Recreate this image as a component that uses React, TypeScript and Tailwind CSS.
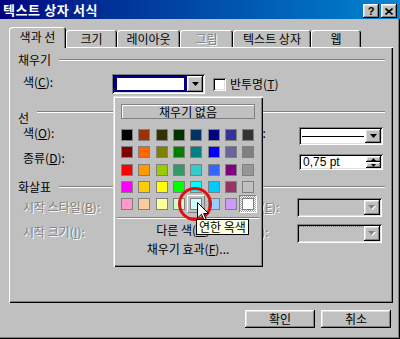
import React from 'react';

const raised =
  'bg-[#c0c0c0] shadow-[inset_-1px_-1px_#000000,inset_1px_1px_#ffffff,inset_-2px_-2px_#808080,inset_2px_2px_#dfdfdf]';
const sunken =
  'shadow-[inset_1px_1px_#808080,inset_-1px_-1px_#ffffff,inset_2px_2px_#000000,inset_-2px_-2px_#dfdfdf]';
const disabledText = 'text-[#808080] [text-shadow:1px_1px_0_#ffffff]';

const swatches = [
  ['#000000', '#993300', '#333300', '#003300', '#003366', '#000080', '#333399', '#333333'],
  ['#800000', '#ff6600', '#808000', '#008000', '#008080', '#0000ff', '#666699', '#808080'],
  ['#ff0000', '#ff9900', '#99cc00', '#339966', '#33cccc', '#3366ff', '#800080', '#969696'],
  ['#ff00ff', '#ffcc00', '#ffff00', '#00ff00', '#00ffff', '#00ccff', '#993366', '#c0c0c0'],
  ['#ff99cc', '#ffcc99', '#ffff99', '#ccffcc', '#ccffff', '#99ccff', '#cc99ff', '#ffffff'],
];

function DownArrow({ disabled }: { disabled?: boolean }) {
  if (disabled) {
    return (
      <svg width="8" height="5" viewBox="0 0 8 5">
        <path d="M1 1h7L4.5 5z" fill="#ffffff" />
        <path d="M0 0h7L3.5 4z" fill="#808080" />
      </svg>
    );
  }
  return (
    <svg width="7" height="4" viewBox="0 0 7 4">
      <path d="M0 0h7L3.5 4z" fill="#000000" />
    </svg>
  );
}

function DropButton({ disabled }: { disabled?: boolean }) {
  return (
    <div className={`flex h-full w-[16px] items-center justify-center ${raised}`}>
      <DownArrow disabled={disabled} />
    </div>
  );
}

function GroupHeader({ label, className = '' }: { label: string; className?: string }) {
  return (
    <div className={`flex pl-[9px] pr-[8px] ${className}`}>
      <span>{label}</span>
      <div className="ml-[8px] h-[2px] flex-1 border-t border-t-[#808080] border-b border-b-white" />
    </div>
  );
}

function Tab({ label, w, active, disabled }: { label: string; w: number; active?: boolean; disabled?: boolean }) {
  const size = active ? 'h-[21px] -mb-[1px] relative z-10' : 'h-[17px]';
  return (
    <div
      className={`flex items-center justify-center rounded-t-[3px] bg-[#c0c0c0] shadow-[inset_1px_1px_#ffffff,inset_-1px_0_#000000,inset_-2px_0_#808080] ${size} ${
        disabled ? disabledText : ''
      }`}
      style={{ width: w }}
    >
      <span className={active ? 'pb-[2px]' : ''}>{label}</span>
    </div>
  );
}

function ColorPopup() {
  return (
    <div className="absolute left-[113px] top-[96px] z-20 flex h-[171px] w-[150px] flex-col bg-[#c0c0c0] px-[8px] pt-[8px] shadow-[inset_1px_1px_#dfdfdf,inset_2px_2px_#ffffff,inset_-1px_-1px_#000000,inset_-2px_-2px_#808080]">
      <div className="flex h-[15px] items-center justify-center border border-[#808080] shadow-[inset_1px_1px_#ffffff]">
        채우기 없음
      </div>
      <div className="mt-[10px] grid grid-cols-[repeat(8,12px)] gap-x-[5.33px] gap-y-[5.25px]">
        {swatches.flat().map((c, i) => (
          <div key={i} className="relative h-[12px] w-[12px]">
            {i === 36 && (
              <div className="absolute -inset-[3px] border border-t-white border-l-white border-r-[#808080] border-b-[#808080]" />
            )}
            {i === 39 && (
              <div className="absolute -inset-[3px] border border-t-[#808080] border-l-[#808080] border-r-white border-b-white bg-[image:repeating-conic-gradient(#ffffff_0%_25%,#a0a0a0_0%_50%)] bg-[length:2px_2px]" />
            )}
            <div className="relative h-full w-full border border-[#808080]" style={{ backgroundColor: c }} />
          </div>
        ))}
      </div>
      <div className="-mx-[4px] mt-[7px] h-[2px] border-t border-t-[#808080] border-b border-b-white" />
      <div className="mt-[1px] flex h-[19px] items-center justify-center">
        다른 색(<u>M</u>)...
      </div>
      <div className="flex h-[19px] items-center justify-center">
        채우기 효과(<u>F</u>)...
      </div>
    </div>
  );
}

export default function App() {
  return (
    <div className="relative h-[339px] w-[400px] overflow-hidden bg-[#c0c0c0] font-['Noto_Sans_CJK_KR','Noto_Sans',sans-serif] text-[12px] leading-[12px] text-black shadow-[inset_-1px_-1px_#000000,inset_-2px_-2px_#808080]">
      {/* title bar */}
      <div className="flex h-[19px] items-center bg-linear-to-r from-[#000080] to-[#1084d0] pl-[3px] pr-[3px]">
        <span className="text-[13px] font-bold leading-[13px] tracking-[0.6px] text-white">텍스트 상자 서식</span>
        <div className="ml-auto mt-[3px] flex gap-[2px]">
          <div className={`flex h-[14px] w-[16px] items-center justify-center ${raised}`}>
            <span className="font-['Liberation_Sans',sans-serif] text-[11px] font-bold leading-[11px]">?</span>
          </div>
          <div className={`flex h-[14px] w-[16px] items-center justify-center ${raised}`}>
            <svg width="8" height="7" viewBox="0 0 8 7">
              <path d="M0.5 0.5L7.5 6.5M7.5 0.5L0.5 6.5" stroke="#000000" strokeWidth="1.6" />
            </svg>
          </div>
        </div>
      </div>

      {/* tabs */}
      <div className="mt-[8px] flex h-[20px] items-end pl-[9px]">
        <Tab label="색과 선" w={57} active />
        <Tab label="크기" w={51} />
        <Tab label="레이아웃" w={63} />
        <Tab label="그림" w={53} disabled />
        <Tab label="텍스트 상자" w={78} />
        <Tab label="웹" w={50} />
      </div>

      {/* panel */}
      <div className="relative ml-[9px] h-[256px] w-[384px] bg-[#c0c0c0] shadow-[inset_1px_1px_#ffffff,inset_-1px_-1px_#000000,inset_-2px_-2px_#808080]">
        <div className="flex flex-col pt-[1px]">
          <GroupHeader label="채우기" className="mt-[6px] h-[12px] items-center" />

          <div className="mt-[8px] flex h-[20px] items-start">
            <span className="ml-[14px] mt-[2px] w-[89px]">
              색(<u>C</u>):
            </span>
            <div className={`flex h-[20px] w-[93px] bg-white p-[2px] ${sunken}`}>
              <div className="flex-1 bg-[#000080] px-[3px] py-[2px]">
                <div className="h-full w-full bg-white" />
              </div>
              <DropButton />
            </div>
            <div className={`ml-[8px] mt-[4px] h-[13px] w-[13px] bg-white ${sunken}`} />
            <span className="ml-[4px] mt-[4px]">
              반투명(<u>T</u>)
            </span>
          </div>

          <div className="mt-[16px] flex h-[14px] items-start pl-[9px] pr-[8px]">
            <span className="mt-[2px]">선</span>
            <div className="ml-[8px] mt-[1px] h-[2px] flex-1 border-t border-t-[#808080] border-b border-b-white" />
          </div>

          <div className="mt-[3px] flex h-[18px] items-start">
            <span className="ml-[14px] w-[89px]">
              색(<u>O</u>):
            </span>
            <span className="ml-[102px] w-[85px]">
              스타일(<u>S</u>):
            </span>
            <div className={`flex h-[18px] w-[84px] bg-white p-[2px] ${sunken}`}>
              <div className="flex flex-1 items-center px-[1px]">
                <div className="h-[1px] w-full bg-black" />
              </div>
              <DropButton />
            </div>
          </div>

          <div className="mt-[7px] flex h-[18px] items-start">
            <span className="ml-[14px] w-[89px]">
              종류(<u>D</u>):
            </span>
            <span className="ml-[102px] w-[85px]">
              두께(<u>W</u>):
            </span>
            <div className={`mt-[2px] flex h-[16px] w-[84px] bg-white p-[2px] ${sunken}`}>
              <span className="flex-1 pl-[2px] pt-[1px] font-['Liberation_Sans',sans-serif] leading-[11px]">0,75 pt</span>
              <div className="flex w-[15px] flex-col">
                <div className={`flex flex-1 items-center justify-center ${raised}`}>
                  <svg width="5" height="3" viewBox="0 0 5 3">
                    <path d="M0 3h5L2.5 0z" fill="#000000" />
                  </svg>
                </div>
                <div className={`flex flex-1 items-center justify-center ${raised}`}>
                  <svg width="5" height="3" viewBox="0 0 5 3">
                    <path d="M0 0h5L2.5 3z" fill="#000000" />
                  </svg>
                </div>
              </div>
            </div>
          </div>

          <GroupHeader label="화살표" className="mt-[11px] h-[12px] items-center" />

          <div className="mt-[5px] flex h-[19px] items-start">
            <span className={`ml-[14px] mt-[3px] w-[89px] ${disabledText}`}>
              시작 스타일(<u>B</u>):
            </span>
            <span className={`ml-[102px] mt-[3px] w-[83px] ${disabledText}`}>
              끝 스타일(<u>E</u>):
            </span>
            <div className={`flex h-[19px] w-[85px] bg-[#c0c0c0] p-[2px] ${sunken}`}>
              <div className="flex-1" />
              <DropButton disabled />
            </div>
          </div>

          <div className="mt-[7px] flex h-[19px] items-start">
            <span className={`ml-[14px] mt-[2px] w-[89px] ${disabledText}`}>
              시작 크기(<u>I</u>):
            </span>
            <span className={`ml-[102px] mt-[2px] w-[83px] ${disabledText}`}>
              끝 크기(<u>Z</u>):
            </span>
            <div className={`flex h-[19px] w-[85px] bg-[#c0c0c0] p-[2px] ${sunken}`}>
              <div className="flex-1 border-t border-dotted border-t-[#808080]" />
              <DropButton disabled />
            </div>
          </div>
        </div>
      </div>

      {/* dialog buttons */}
      <div className="mt-[7px] flex justify-end gap-[6px] pr-[9px]">
        <div className={`flex h-[18px] w-[70px] items-center justify-center ${raised}`}>확인</div>
        <div className={`flex h-[18px] w-[70px] items-center justify-center ${raised}`}>취소</div>
      </div>

      <ColorPopup />

      {/* highlight circle, pointer and tooltip */}
      <div className="absolute left-[178px] top-[187px] z-[25] h-[34px] w-[34px] rounded-full border-[3px] border-[#e01010]" />
      <svg className="absolute left-[197px] top-[202px] z-30" width="12" height="19" viewBox="0 0 12 19">
        <path d="M0.5 0.5V16L4.5 12.2L7.2 18.5L9.3 17.6L6.7 11.5H11.5Z" fill="#ffffff" stroke="#000000" strokeWidth="1" />
      </svg>
      <div className="absolute left-[196px] top-[219px] z-40 flex h-[16px] items-center border border-black bg-[#ffffe1] px-[2px]">
        연한 옥색
      </div>
    </div>
  );
}
